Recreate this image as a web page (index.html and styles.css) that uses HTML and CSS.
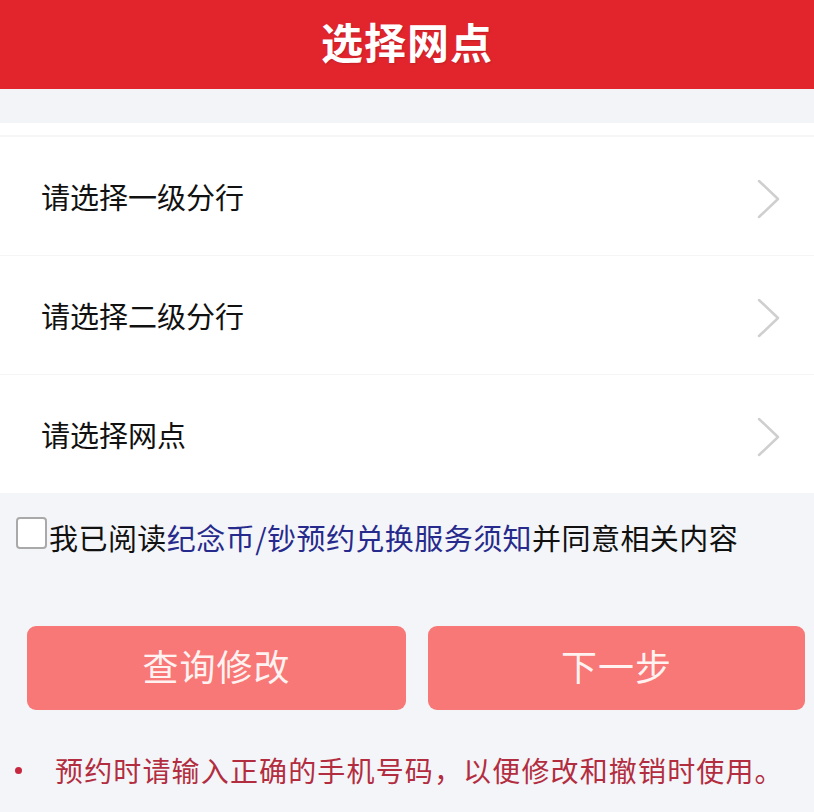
FILE: index.html
```html
<!DOCTYPE html>
<html lang="zh-CN">
<head>
  <meta charset="UTF-8">
  <title>选择网点</title>
  <link rel="stylesheet" href="styles.css">
</head>
<body>
  <header class="barra-titulo">
    <h1>选择网点</h1>
  </header>

  <div class="franja"></div>

  <div class="lista">
    <div class="lista-tope"></div>
    <div class="fila">
      <span>请选择一级分行</span>
      <svg class="flecha" width="26" height="42" viewBox="0 0 26 42"><polyline points="3,3 22,21 3,39" /></svg>
    </div>
    <div class="fila">
      <span>请选择二级分行</span>
      <svg class="flecha" width="26" height="42" viewBox="0 0 26 42"><polyline points="3,3 22,21 3,39" /></svg>
    </div>
    <div class="fila">
      <span>请选择网点</span>
      <svg class="flecha" width="26" height="42" viewBox="0 0 26 42"><polyline points="3,3 22,21 3,39" /></svg>
    </div>
  </div>

  <div class="acuerdo">
    <span class="caja"></span>
    <span>我已阅读<a class="enlace">纪念币/钞预约兑换服务须知</a>并同意相关内容</span>
  </div>

  <div class="botones">
    <button class="boton">查询修改</button>
    <button class="boton">下一步</button>
  </div>

  <div class="nota">
    <span class="punto"></span>
    <span>预约时请输入正确的手机号码，以便修改和撤销时使用。</span>
  </div>
</body>
</html>
```

FILE: styles.css
```css
body {
  margin: 0;
  font-family: "Noto Sans CJK SC", "Noto Sans", sans-serif;
  background-color: #f4f5f8;
  color: #111;
}

.barra-titulo {
  height: 89px;
  background-color: #e2252d;
  display: flex;
  align-items: center;
  justify-content: center;
}

.barra-titulo h1 {
  margin: 0 0 8px 0;
  color: #fff;
  font-size: 42px;
  font-weight: bold;
  letter-spacing: 1px;
  text-shadow: 1px 1px 2px rgba(0, 0, 0, 0.15);
}

.franja {
  height: 34px;
  background-color: #f3f4f8;
}

.lista {
  background-color: #fff;
}

.lista-tope {
  height: 12px;
  border-bottom: 2px solid #f6f6f6;
}

.fila {
  height: 118px;
  padding: 0 32px 0 41px;
  display: flex;
  align-items: center;
  justify-content: space-between;
  font-size: 29px;
  border-bottom: 1px solid #f5f5f5;
}

.fila:last-child {
  border-bottom: none;
}

.flecha {
  margin-top: 6px;
}

.flecha polyline {
  fill: none;
  stroke: #cfcfcf;
  stroke-width: 2.5;
  stroke-linecap: round;
  stroke-linejoin: round;
}

.acuerdo {
  padding: 23px 0 0 16px;
  display: flex;
  align-items: center;
  font-size: 29px;
  letter-spacing: 0.45px;
}

.caja {
  width: 27px;
  height: 28px;
  border: 2px solid #a9a9a9;
  border-radius: 4px;
  background-color: #fff;
  margin: -8px 2px 0 0;
  flex-shrink: 0;
}

.enlace {
  color: #262a8c;
}

.botones {
  display: grid;
  grid-template-columns: 379px 377px;
  gap: 22px;
  padding: 68px 0 0 27px;
}

.boton {
  height: 84px;
  border: none;
  border-radius: 9px;
  background-color: #f87777;
  color: #fff2f0;
  font-family: "Noto Sans CJK SC", sans-serif;
  font-size: 36px;
  letter-spacing: 1px;
  padding: 0 0 6px 0;
}

.nota {
  padding: 40px 0 0 15px;
  display: flex;
  align-items: center;
  font-size: 28px;
  color: #b22d3f;
  letter-spacing: 1.15px;
}

.punto {
  width: 7px;
  height: 7px;
  border-radius: 50%;
  background-color: #c8283f;
  margin-right: 33px;
}
```
